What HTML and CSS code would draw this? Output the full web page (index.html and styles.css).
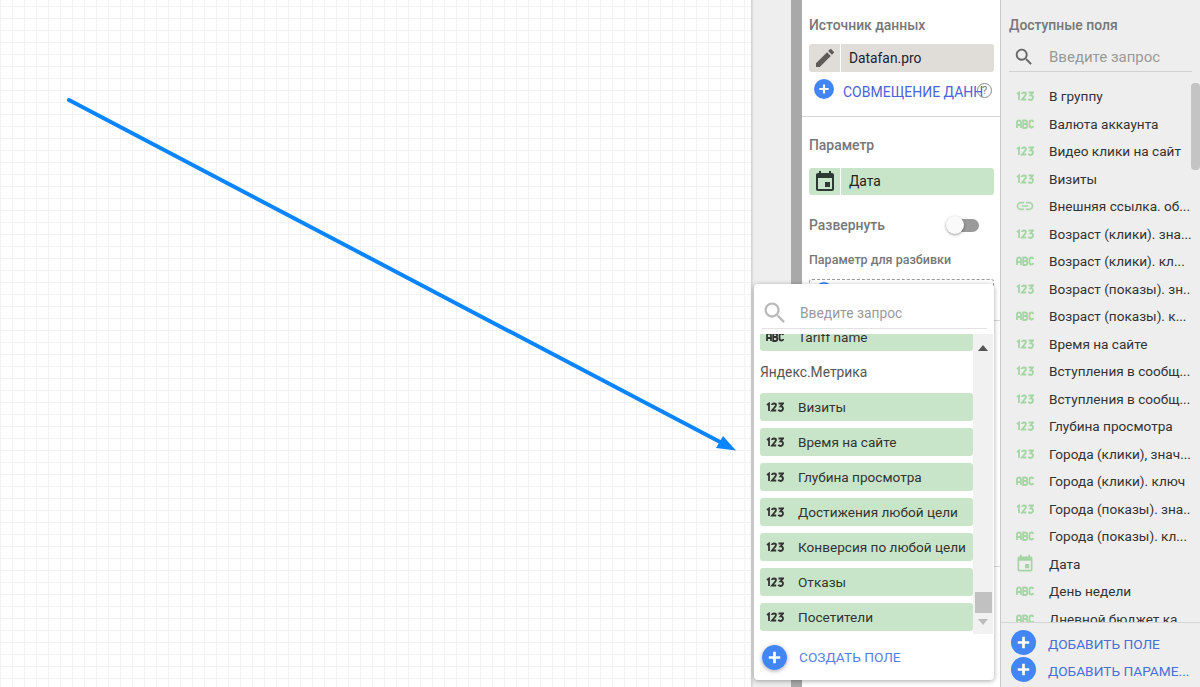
FILE: index.html
```html
<!DOCTYPE html>
<html lang="en">
<head>
    <meta charset="UTF-8">
    <meta name="viewport" content="width=device-width, initial-scale=1.0">
    <title>Report editor</title>
    <link rel="stylesheet" href="styles.css">
</head>
<body>
    <svg width="0" height="0" class="defs">
        <symbol id="i123" viewBox="0 0 18 10"><path d="M1 3l2-1.500v7.500M6 3q0-1.500 2-1.500t2 1.500q0 1-1.500 2.500L6 8.500h4.200M12.500 1.500H17l-2.500 2.800q2.500 0 2.500 2.200T14.700 9q-1.700 0-2.400-1.200" fill="none" stroke="currentColor" stroke-width="1.800"/></symbol>
        <symbol id="iabc" viewBox="0 0 18 10"><path d="M1 9V3.500Q1 1.500 3 1.500T5 3.500V9M1 6h4M7.200 9V1.500h2q1.900 0 1.900 1.800T9.200 5q2.100 0 2.100 2t-2.100 2zM7.200 5h2M17.500 3Q17 1.500 15.500 1.500 13.500 1.500 13.500 3.500v3q0 2 2 2 1.500 0 2-1.500" fill="none" stroke="currentColor" stroke-width="1.800"/></symbol>
        <symbol id="ilink" viewBox="0 0 24 24"><path d="M3.900 12c0-1.710 1.390-3.100 3.100-3.100h4V7H7c-2.760 0-5 2.240-5 5s2.240 5 5 5h4v-1.900H7c-1.710 0-3.100-1.390-3.100-3.100zM8 13h8v-2H8v2zm9-6h-4v1.900h4c1.710 0 3.100 1.390 3.100 3.100s-1.390 3.100-3.100 3.100h-4V17h4c2.760 0 5-2.240 5-5s-2.240-5-5-5z" fill="currentColor"/></symbol>
        <symbol id="icalendar" viewBox="0 0 24 24"><path d="M17 12h-5v5h5v-5zM16 1v2H8V1H6v2H5c-1.110 0-1.990.9-1.990 2L3 19c0 1.100.89 2 2 2h14c1.100 0 2-.9 2-2V5c0-1.100-.9-2-2-2h-1V1h-2zm3 18H5V8h14v11z" fill="currentColor"/></symbol>
        <symbol id="isearch" viewBox="0 0 24 24"><path d="M15.500 14h-.79l-.28-.27C15.410 12.590 16 11.110 16 9.500 16 5.910 13.090 3 9.500 3S3 5.910 3 9.500 5.910 16 9.500 16c1.610 0 3.090-.59 4.230-1.570l.27.28v.79l5 4.990L20.490 19l-4.990-5zm-6 0C7.010 14 5 11.990 5 9.500S7.010 5 9.500 5 14 7.010 14 9.500 11.990 14 9.500 14z" fill="currentColor"/></symbol>
        <symbol id="iplus" viewBox="0 0 24 24"><circle cx="12" cy="12" r="12" fill="#4285f4"/><path d="M12 6.500v11M6.500 12h11" stroke="#fff" stroke-width="2.600"/></symbol>
    </svg>

    <div class="editor">
        <div class="canvas">
            <!-- arrow drawn on the report page -->
            <svg class="arrow" width="751" height="687" viewBox="0 0 751 687">
                <path d="M69 100L722 443" stroke="#0a84ff" stroke-width="4" stroke-linecap="round" fill="none"/>
                <path d="M736 450.500L716 448L723 436z" fill="#0a84ff"/>
            </svg>
        </div>
        <div class="rail"></div>
        <div class="band"></div>

        <div class="props">
            <section class="props-block source">
                <h3>Источник данных</h3>
                <div class="chip chip-source">
                    <span class="chip-icon">
                        <svg width="24" height="24" viewBox="0 0 24 24"><path d="M3 17.250V21h3.750L17.810 9.940l-3.750-3.750L3 17.250zM20.710 7.040a1 1 0 000-1.410l-2.340-2.340a1 1 0 00-1.410 0l-1.830 1.830 3.750 3.750 1.830-1.830z" fill="#5f5b58"/></svg>
                    </span>
                    <span class="chip-label">Datafan.pro</span>
                </div>
                <div class="blend">
                    <svg class="plus-small" width="20" height="20"><use href="#iplus"/></svg>
                    <span class="blend-text">СОВМЕЩЕНИЕ ДАНН</span>
                    <span class="help">?</span>
                </div>
            </section>
            <section class="props-block dimension">
                <h3>Параметр</h3>
                <div class="chip chip-green">
                    <span class="chip-icon"><svg width="24" height="24"><use href="#icalendar"/></svg></span>
                    <span class="chip-label">Дата</span>
                </div>
                <div class="expand">
                    <span>Развернуть</span>
                    <span class="switch"><i></i></span>
                </div>
                <h4>Параметр для разбивки</h4>
                <div class="dropzone"><svg width="18" height="18"><use href="#iplus"/></svg></div>
            </section>
            <div class="props-rest"></div>
        </div>

        <div class="fields">
            <h3>Доступные поля</h3>
            <div class="fields-search">
                <svg width="22" height="22"><use href="#isearch"/></svg>
                <span>Введите запрос</span>
            </div>
            <div class="fields-list">
                <div class="field"><svg class="t"><use href="#i123"/></svg><span>В группу</span></div>
                <div class="field"><svg class="t"><use href="#iabc"/></svg><span>Валюта аккаунта</span></div>
                <div class="field"><svg class="t"><use href="#i123"/></svg><span>Видео клики на сайт</span></div>
                <div class="field"><svg class="t"><use href="#i123"/></svg><span>Визиты</span></div>
                <div class="field"><svg class="t t-link"><use href="#ilink"/></svg><span>Внешняя ссылка. об...</span></div>
                <div class="field"><svg class="t"><use href="#i123"/></svg><span>Возраст (клики). зна...</span></div>
                <div class="field"><svg class="t"><use href="#iabc"/></svg><span>Возраст (клики). кл...</span></div>
                <div class="field"><svg class="t"><use href="#i123"/></svg><span>Возраст (показы). зн..</span></div>
                <div class="field"><svg class="t"><use href="#iabc"/></svg><span>Возраст (показы). к...</span></div>
                <div class="field"><svg class="t"><use href="#i123"/></svg><span>Время на сайте</span></div>
                <div class="field"><svg class="t"><use href="#i123"/></svg><span>Вступления в сообщ...</span></div>
                <div class="field"><svg class="t"><use href="#i123"/></svg><span>Вступления в сообщ...</span></div>
                <div class="field"><svg class="t"><use href="#i123"/></svg><span>Глубина просмотра</span></div>
                <div class="field"><svg class="t"><use href="#i123"/></svg><span>Города (клики), знач...</span></div>
                <div class="field"><svg class="t"><use href="#iabc"/></svg><span>Города (клики). ключ</span></div>
                <div class="field"><svg class="t"><use href="#i123"/></svg><span>Города (показы). зна..</span></div>
                <div class="field"><svg class="t"><use href="#iabc"/></svg><span>Города (показы). кл...</span></div>
                <div class="field"><svg class="t t-date"><use href="#icalendar"/></svg><span>Дата</span></div>
                <div class="field"><svg class="t"><use href="#iabc"/></svg><span>День недели</span></div>
                <div class="field"><svg class="t"><use href="#iabc"/></svg><span>Дневной бюджет ка...</span></div>
                <div class="fields-thumb"></div>
            </div>
            <div class="fields-foot">
                <div class="add"><svg width="25" height="25"><use href="#iplus"/></svg><span>ДОБАВИТЬ ПОЛЕ</span></div>
                <div class="add"><svg width="25" height="25"><use href="#iplus"/></svg><span>ДОБАВИТЬ ПАРАМЕ...</span></div>
            </div>
        </div>

        <!-- field picker dropdown -->
        <div class="picker">
            <div class="picker-search">
                <svg width="28" height="28"><use href="#isearch"/></svg>
                <span>Введите запрос</span>
            </div>
            <div class="picker-body">
                <div class="picker-list">
                    <div class="pick"><svg class="t"><use href="#iabc"/></svg><span>Tariff name</span></div>
                    <div class="picker-group">Яндекс.Метрика</div>
                    <div class="pick"><svg class="t"><use href="#i123"/></svg><span>Визиты</span></div>
                    <div class="pick"><svg class="t"><use href="#i123"/></svg><span>Время на сайте</span></div>
                    <div class="pick"><svg class="t"><use href="#i123"/></svg><span>Глубина просмотра</span></div>
                    <div class="pick"><svg class="t"><use href="#i123"/></svg><span>Достижения любой цели</span></div>
                    <div class="pick"><svg class="t"><use href="#i123"/></svg><span>Конверсия по любой цели</span></div>
                    <div class="pick"><svg class="t"><use href="#i123"/></svg><span>Отказы</span></div>
                    <div class="pick"><svg class="t"><use href="#i123"/></svg><span>Посетители</span></div>
                </div>
                <div class="scrollbar">
                    <i class="tri tri-up"></i>
                    <i class="bar"></i>
                    <i class="tri tri-down"></i>
                </div>
            </div>
            <div class="picker-foot">
                <span class="fab"><svg width="25" height="25"><use href="#iplus"/></svg></span>
                <span>СОЗДАТЬ ПОЛЕ</span>
            </div>
        </div>
    </div>
</body>
</html>
```

FILE: styles.css
```css
* {
    margin: 0;
    padding: 0;
    box-sizing: border-box;
}

html, body {
    height: 100%;
    overflow: hidden;
}

body {
    font-family: Roboto, "Noto Sans", sans-serif;
    font-size: 14px;
    color: #222;
}

.defs {
    display: none;
}

.editor {
    position: relative;
    display: flex;
    width: 1200px;
    height: 687px;
    overflow: hidden;
}

/* canvas */
.canvas {
    position: relative;
    width: 751px;
    background-color: #fff;
    background-image:
        linear-gradient(to right, #f2f2f2 1px, transparent 1px),
        linear-gradient(to bottom, #f2f2f2 1px, transparent 1px);
    background-size: 12px 12px;
    background-position: 0 6px;
}

.arrow {
    position: absolute;
    top: 0;
    left: 0;
}

.rail {
    width: 40px;
    background: linear-gradient(to right, #cfcfcf, #eeeeee 3px);
}

.band {
    width: 11px;
    background: #a9a9a9;
}

/* properties */
.props {
    width: 198px;
    display: flex;
    flex-direction: column;
    background: #fff;
}

.props-block {
    padding: 0 6px 0 7px;
    border-bottom: 1px solid #d8d8d8;
}

.source {
    height: 117px;
    padding-top: 17px;
}

.dimension {
    height: 204px;
    padding-top: 20px;
}

h3 {
    font-size: 13.9px;
    line-height: 16px;
    font-weight: 500;
    color: #777;
}

.chip {
    display: flex;
    height: 28px;
    margin-top: 11px;
    border-radius: 3px;
    overflow: hidden;
}

.chip-icon {
    width: 32px;
    display: flex;
    align-items: center;
    justify-content: center;
    border-right: 1px solid #fff;
}

.chip-label {
    flex: 1;
    padding-left: 8px;
    font-size: 13.8px;
    line-height: 28px;
}

.chip-source {
    background: #e0dcd8;
    color: #1a2233;
}

.chip-green {
    margin-top: 15px;
    height: 27px;
    background: #c9e5c9;
    color: #2c3a33;
}

.chip-green .chip-label {
    color: #222;
    line-height: 27px;
}

.blend {
    position: relative;
    display: flex;
    align-items: flex-start;
    height: 20px;
    margin-top: 7px;
    padding-left: 5px;
    white-space: nowrap;
}

.blend-text {
    margin-left: 9px;
    margin-top: 5px;
    font-size: 14px;
    line-height: 16px;
    color: #4a63d8;
}

.help {
    position: absolute;
    right: 2px;
    top: 4px;
    width: 15px;
    height: 15px;
    border: 1px solid #8a8a8a;
    border-radius: 50%;
    font-size: 11px;
    line-height: 13px;
    text-align: center;
    color: #777;
}

.expand {
    display: flex;
    align-items: center;
    justify-content: space-between;
    height: 20px;
    margin-top: 20px;
    padding-right: 15px;
    font-size: 13.9px;
    font-weight: 500;
    color: #777;
}

.switch {
    position: relative;
    width: 29px;
    height: 13px;
    border-radius: 7px;
    background: #9a9a9a;
}

.switch i {
    position: absolute;
    left: -4px;
    top: -3px;
    width: 18px;
    height: 18px;
    border-radius: 50%;
    background: #fafafa;
    box-shadow: 0 1px 3px rgba(0, 0, 0, 0.4);
}

h4 {
    margin-top: 18px;
    font-size: 12.5px;
    line-height: 14px;
    font-weight: 500;
    color: #777;
}

.dropzone {
    height: 40px;
    margin-top: 12px;
    padding: 2px 0 0 5px;
    border: 1px dashed #999;
    border-radius: 3px;
}

.props-rest {
    height: 246px;
    border-bottom: 1px solid #d8d8d8;
}

/* available fields */
.fields {
    flex: 1;
    display: flex;
    flex-direction: column;
    background: #eeeeee;
    border-left: 1px solid #c9c9c9;
    padding-top: 17px;
}

.fields h3 {
    padding-left: 8px;
}

.fields-search {
    display: flex;
    align-items: center;
    height: 30px;
    margin: 9px 8px 0;
    padding-left: 4px;
    border-bottom: 1px solid #d2d2d2;
    color: #666;
}

.fields-search span {
    margin-left: 14px;
    font-size: 15px;
    color: #999;
}

.fields-list {
    position: relative;
    flex: 1;
    padding-top: 10.500px;
    overflow: hidden;
}

.field {
    display: flex;
    align-items: center;
    height: 27.5px;
    padding-left: 15px;
    font-size: 13.6px;
    white-space: nowrap;
    color: #333;
}

.field span {
    margin-left: 15px;
}

.t {
    flex: none;
    width: 18px;
    height: 10px;
    color: #a5d5a5;
}

.t-link {
    width: 20px;
    height: 20px;
    margin: 0 -1px;
}

.t-date {
    height: 20px;
    width: 20px;
    margin: 0 -1px;
}

.fields-thumb {
    position: absolute;
    top: 11px;
    right: 0;
    width: 9px;
    height: 87px;
    border-radius: 4px;
    background: #c4c4c4;
}

.fields-foot {
    height: 65px;
    padding: 6px 0 0 10px;
    border-top: 1px solid #d4d4d4;
    background: #eeeeee;
}

.add {
    display: flex;
    align-items: center;
    height: 27px;
    font-size: 13.7px;
    color: #4a6fd8;
    white-space: nowrap;
}

.add span {
    margin-left: 12px;
    padding-top: 2px;
}

/* picker dropdown */
.picker {
    position: absolute;
    left: 754px;
    top: 284px;
    width: 240px;
    height: 396px;
    display: flex;
    flex-direction: column;
    background: #fff;
    border-radius: 4px;
    box-shadow: 0 1px 5px rgba(0, 0, 0, 0.35);
}

.picker-search {
    display: flex;
    align-items: center;
    height: 45px;
    margin: 0 7px 5px 8px;
    padding-top: 14px;
    border-bottom: 1px solid #e2e2e2;
    color: #bbb;
}

.picker-search svg {
    margin-left: -1px;
}

.picker-search span {
    margin-left: 11px;
    font-size: 13.8px;
    color: #999;
}

.picker-body {
    display: flex;
    height: 300px;
    padding-left: 6px;
    overflow: hidden;
}

.picker-list {
    width: 213px;
    margin-top: -11px;
}

.pick {
    display: flex;
    align-items: center;
    height: 28px;
    margin-bottom: 7px;
    padding-left: 6px;
    background: #c9e5c9;
    border-radius: 3px;
    font-size: 13.6px;
    white-space: nowrap;
    color: #333;
}

.pick .t {
    color: #333;
}

.pick span {
    margin-left: 14px;
}

.picker-group {
    height: 35px;
    font-size: 13.8px;
    line-height: 28px;
    color: #555;
}

.scrollbar {
    position: relative;
    width: 20px;
    background: #f1f1f1;
}

.tri {
    position: absolute;
    left: 5px;
    border-left: 5px solid transparent;
    border-right: 5px solid transparent;
}

.tri-up {
    top: 11px;
    border-bottom: 6px solid #555;
}

.tri-down {
    bottom: 9px;
    border-top: 6px solid #bbb;
}

.bar {
    position: absolute;
    left: 2px;
    bottom: 21px;
    width: 17px;
    height: 21px;
    background: #c1c1c1;
}

.picker-foot {
    flex: 1;
    display: flex;
    align-items: center;
    padding-left: 8px;
    font-size: 13.7px;
    color: #5a7fe0;
}

.fab {
    display: flex;
    width: 25px;
    height: 25px;
    margin-right: 12px;
    border-radius: 50%;
    box-shadow: 0 1px 4px rgba(0, 0, 0, 0.35);
}
```
